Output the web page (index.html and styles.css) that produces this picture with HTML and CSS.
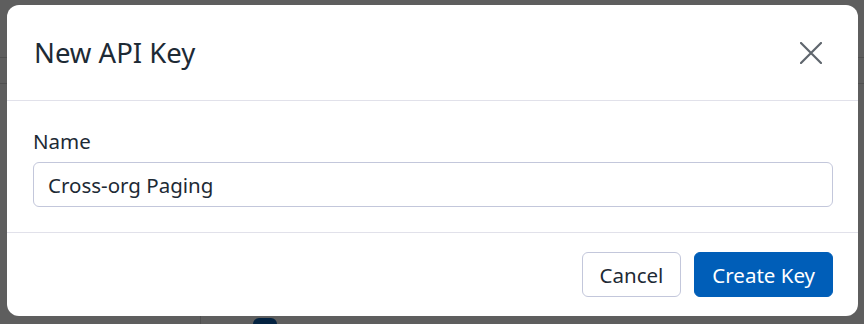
FILE: index.html
```html
<html lang="en">

<head>
    <meta charset="UTF-8">
    <meta name="viewport" content="width=device-width, initial-scale=1.0">
    <title>API Keys</title>
    <link rel="stylesheet" href="styles.css">
</head>

<body>
    <div class="page">
        <div class="page-top"></div>
        <div class="page-tabs"></div>
        <div class="page-main">
            <div class="sidebar"></div>
            <div class="content">
                <span class="pill"></span>
            </div>
        </div>
    </div>

    <div class="overlay">
        <div class="modal">
            <div class="modal-header">
                <h2 class="modal-title">New API Key</h2>
                <button class="close" aria-label="Close">
                    <svg width="22" height="22" viewBox="0 0 22 22">
                        <path d="M1 1 L21 21 M21 1 L1 21" stroke="#5f666d" stroke-width="2.2" stroke-linecap="round" fill="none" />
                    </svg>
                </button>
            </div>
            <div class="modal-body">
                <label class="label" for="key-name">Name</label>
                <input class="input" id="key-name" type="text" value="Cross-org Paging">
            </div>
            <div class="modal-footer">
                <button class="btn btn-default">Cancel</button>
                <button class="btn btn-primary">Create Key</button>
            </div>
        </div>
    </div>
</body>

</html>
```

FILE: styles.css
```css
body {
    margin: 0;
    font-family: "Noto Sans", sans-serif;
    color: #1d2a35;
    background: #ffffff;
}

.page {
    height: 324px;
    display: flex;
    flex-direction: column;
}

.page-top {
    height: 57px;
    border-bottom: 1px solid #d8d8d8;
}

.page-tabs {
    height: 25px;
    border-bottom: 1px solid #d8d8d8;
}

.page-main {
    flex: 1;
    display: flex;
}

.sidebar {
    width: 200px;
    border-right: 1px solid #d8d8d8;
}

.content {
    flex: 1;
    display: flex;
    align-items: flex-end;
    padding-left: 52px;
}

.pill {
    width: 24px;
    height: 6px;
    border-radius: 6px 6px 0 0;
    background: #0b5fb0;
}

.overlay {
    position: fixed;
    inset: 0;
    background: rgba(0, 0, 0, 0.63);
}

.modal {
    margin: 5px 0 0 7px;
    width: 851px;
    background: #ffffff;
    border-radius: 12px;
}

.modal-header {
    height: 95px;
    display: flex;
    align-items: center;
    justify-content: space-between;
    padding: 0 25px 0 27px;
    border-bottom: 1px solid #e1e1ea;
}

.modal-title {
    margin: 0;
    font-size: 27.5px;
    font-weight: 400;
    color: #1d2a35;
}

.close {
    width: 44px;
    height: 44px;
    padding: 0;
    border: 0;
    background: none;
    display: flex;
    align-items: center;
    justify-content: center;
}

.modal-body {
    padding: 25px 25px 25px 26px;
    display: flex;
    flex-direction: column;
    border-bottom: 1px solid #e1e1ea;
}

.label {
    font-size: 20.5px;
    line-height: 30px;
    margin-bottom: 6px;
}

.input {
    height: 45px;
    box-sizing: border-box;
    border: 1px solid #c3c7db;
    border-radius: 6px;
    padding: 0 14px;
    font-family: "Noto Sans", sans-serif;
    font-size: 20.5px;
    color: #1d2a35;
}

.modal-footer {
    display: flex;
    justify-content: flex-end;
    gap: 13px;
    padding: 19px 25px;
}

.btn {
    height: 45px;
    padding: 0 17px;
    border-radius: 6px;
    font-family: "Noto Sans", sans-serif;
    font-size: 20.5px;
}

.btn-default {
    background: #ffffff;
    border: 1px solid #c3c7db;
    color: #1d2a35;
}

.btn-primary {
    background: #005eb8;
    border: 1px solid #005eb8;
    color: #ffffff;
    padding: 0 17px;
}
```
